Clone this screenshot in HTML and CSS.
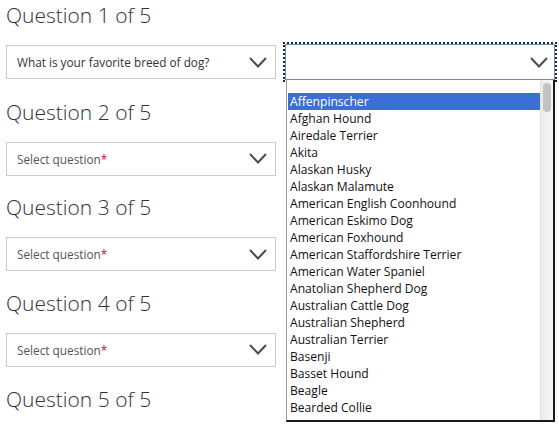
FILE: index.html
```html
<!DOCTYPE html>
<html>
<head>
<meta charset="utf-8">
<link rel="stylesheet" href="styles.css">
</head>
<body>
<div class="form">
  <section class="q">
    <h2 class="q-title">Question 1 of 5</h2>
    <div class="row">
      <div class="select">
        <span class="select-text">What is your favorite breed of dog?</span>
        <svg class="chev" viewBox="0 0 18 11"><path d="M1 1 L9 9.5 L17 1"/></svg>
      </div>
      <div class="combo">
        <div class="select focused">
          <span class="select-text"></span>
          <svg class="chev" viewBox="0 0 18 11"><path d="M1 1 L9 9.5 L17 1"/></svg>
        </div>
        <div class="listbox">
          <ul class="options">
            <li class="selected">Affenpinscher</li>
            <li>Afghan Hound</li>
            <li>Airedale Terrier</li>
            <li>Akita</li>
            <li>Alaskan Husky</li>
            <li>Alaskan Malamute</li>
            <li>American English Coonhound</li>
            <li>American Eskimo Dog</li>
            <li>American Foxhound</li>
            <li>American Staffordshire Terrier</li>
            <li>American Water Spaniel</li>
            <li>Anatolian Shepherd Dog</li>
            <li>Australian Cattle Dog</li>
            <li>Australian Shepherd</li>
            <li>Australian Terrier</li>
            <li>Basenji</li>
            <li>Basset Hound</li>
            <li>Beagle</li>
            <li>Bearded Collie</li>
            <li>Beauceron</li>
          </ul>
          <div class="scrollbar"><div class="thumb"></div></div>
        </div>
      </div>
    </div>
  </section>
  <section class="q">
    <h2 class="q-title">Question 2 of 5</h2>
    <div class="row">
      <div class="select">
        <span class="select-text placeholder">Select question<span class="req">*</span></span>
        <svg class="chev" viewBox="0 0 18 11"><path d="M1 1 L9 9.5 L17 1"/></svg>
      </div>
    </div>
  </section>
  <section class="q">
    <h2 class="q-title">Question 3 of 5</h2>
    <div class="row">
      <div class="select">
        <span class="select-text placeholder">Select question<span class="req">*</span></span>
        <svg class="chev" viewBox="0 0 18 11"><path d="M1 1 L9 9.5 L17 1"/></svg>
      </div>
    </div>
  </section>
  <section class="q">
    <h2 class="q-title">Question 4 of 5</h2>
    <div class="row">
      <div class="select">
        <span class="select-text placeholder">Select question<span class="req">*</span></span>
        <svg class="chev" viewBox="0 0 18 11"><path d="M1 1 L9 9.5 L17 1"/></svg>
      </div>
    </div>
  </section>
  <section class="q">
    <h2 class="q-title">Question 5 of 5</h2>
  </section>
</div>
</body>
</html>
```
FILE: styles.css
```css
html, body {
  margin: 0;
  padding: 0;
  background: #fff;
}
body {
  font-family: "Open Sans", "Liberation Sans", sans-serif;
  color: #333;
  overflow: hidden;
  height: 425px;
}
.form {
  padding-left: 6px;
}
.q {
  display: flex;
  flex-direction: column;
  padding-bottom: 16.67px;
}
.q-title {
  margin: 0 0 15px 0;
  font-size: 21px;
  font-weight: 300;
  line-height: 30px;
  color: #333;
  height: 30px;
}
.row {
  display: flex;
  gap: 9px;
  align-items: flex-start;
}
.select {
  box-sizing: border-box;
  width: 270px;
  height: 34px;
  border: 1px solid #cacaca;
  display: flex;
  align-items: center;
  justify-content: space-between;
  padding: 0 8px 0 10px;
  background: #fff;
}
.select-text {
  font-size: 11.8px;
  color: #333;
}
.select-text.placeholder {
  color: #555;
}
.req {
  color: #c8102e;
}
.chev {
  width: 18px;
  height: 11px;
  flex: none;
}
.chev path {
  fill: none;
  stroke: #4a4a4a;
  stroke-width: 2;
}
.combo {
  position: relative;
  width: 270px;
}
.select.focused {
  border-color: #6f8ea6;
  outline: 2px dotted #1c2b3a;
  outline-offset: 0px;
  height: 36px;
  margin-top: -1px;
  padding-right: 6px;
}
.listbox {
  position: absolute;
  left: 1px;
  top: 35px;
  width: 269px;
  height: 342px;
  box-sizing: border-box;
  background: #fff;
  border-left: 1px solid #9a9a9a;
  border-right: 2px solid #1a1a1a;
  border-bottom: 2px solid #1a1a1a;
  overflow: hidden;
  display: flex;
}
.options {
  list-style: none;
  margin: 0;
  padding: 13px 0 0 1px;
  flex: 1;
}
.options li {
  font-size: 12.1px;
  line-height: 17px;
  height: 17px;
  color: #111;
  padding-left: 2px;
  white-space: nowrap;
}
.options li.selected {
  background: #3b6fd6;
  color: #fff;
}
.scrollbar {
  width: 13px;
  flex: none;
  background: linear-gradient(to right, #ebebeb, #f6f6f6);
  border-left: 1px solid #e2e2e2;
  padding: 3px 0 0 2px;
  box-sizing: border-box;
}
.thumb {
  width: 8px;
  height: 29px;
  border-radius: 4px;
  background: #c2c2c2;
}
```
